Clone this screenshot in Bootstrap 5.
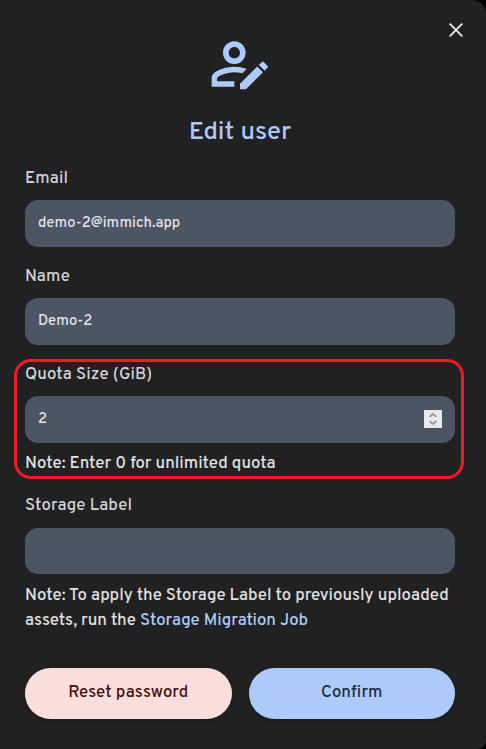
<!DOCTYPE html>
<html lang="en">
<head>
<meta charset="utf-8">
<meta name="viewport" content="width=device-width, initial-scale=1">
<title>Edit user</title>
<link href="https://cdn.jsdelivr.net/npm/bootstrap@5.3.0/dist/css/bootstrap.min.css" rel="stylesheet">
<style>
body{background:#000;font-family:Overpass,Roboto,sans-serif;font-size:16.8px;font-weight:500;line-height:25px;overflow:hidden}
.user-dialog{height:749px;background:#212121;color:#e2e2e5;border-radius:0 14px 9px 0;padding:0 31px 0 25px}
.dialog-close{top:21px;right:21px;width:18px;height:18px;color:#e6e7ea}
.dialog-head{padding-top:30px;color:#adcbfa;height:165px}
.dialog-title{font-size:25.5px;line-height:32px;font-weight:500;margin-top:19px}
.form-label{display:block;line-height:24px;height:24px;margin-bottom:9px;padding-top:2px;box-sizing:content-box;font-weight:500;letter-spacing:.12px;color:#d2d4da}
.form-control,.form-control:focus{height:47px;border:0;border-radius:13px;background:#4c5564;color:#e2e4e9;font-size:14.75px;font-weight:500;padding:0 13px 1px;line-height:22px}
.field-group{height:98px}
.quota-group{height:131px}
.storage-group .form-label{margin-bottom:10px}
.storage-group .form-control{height:46px}
.field-note{margin:8px 0 0}
.storage-group .field-note{margin-top:9px}
.spinner-box{right:13px;top:49px;width:18px;height:18px;background:#e9e9ed}
.quota-mark{left:-11px;right:-9px;top:-2px;height:120px;border:3px solid #ed1c24;border-radius:17px;pointer-events:none}
.job-link{color:#adcbfa}
.dialog-actions{gap:17px;margin-top:35px}
.dialog-actions .btn{height:51px;border:0;padding:0 0 1px;font-size:16.8px;font-weight:500;letter-spacing:.1px;box-shadow:0 2px 3px #0002}
.btn-reset{background:#fadedb;color:#450e0c}
.btn-confirm{background:#adcbfa;color:#1f2937}
</style>
<script src="https://cdn.jsdelivr.net/npm/bootstrap@5.3.0/dist/js/bootstrap.bundle.min.js"></script>
</head>
<body>
<main class="user-dialog position-relative">
  <button class="dialog-close position-absolute btn p-0 border-0 d-flex" aria-label="Close"><svg width="18" height="18" viewBox="0 0 18 18" fill="none" stroke="currentColor" stroke-width="1.9"><path d="M2.7 2.7 15.3 15.3M15.3 2.7 2.7 15.3"/></svg></button>
  <header class="dialog-head d-flex flex-column align-items-center">
    <svg class="flex-shrink-0" width="68" height="68" viewBox="0 0 24 24" fill="currentColor"><path d="M2 17V20H10V18.11H3.9V17C3.9 16.36 7.03 14.9 10 14.9C10.96 14.91 11.91 15.04 12.83 15.28L14.35 13.76C12.95 13.29 11.5 13.03 10 13C7.33 13 2 14.33 2 17M10 4C7.79 4 6 5.79 6 8S7.79 12 10 12 14 10.21 14 8 12.21 4 10 4M10 10C8.9 10 8 9.11 8 8S8.9 6 10 6 12 6.9 12 8 11.11 10 10 10M21.7 13.35L20.7 14.35L18.65 12.35L19.65 11.35C19.86 11.14 20.21 11.14 20.42 11.35L21.7 12.63C21.91 12.84 21.91 13.14 21.7 13.35M12 18.94L18.06 12.88L20.11 14.88L14.11 20.95H12V18.94"/></svg>
    <h1 class="dialog-title mb-0">Edit user</h1>
  </header>
  <form>
    <div class="field-group"><label class="form-label" for="email">Email</label><input class="form-control" id="email" value="demo-2@immich.app"></div>
    <div class="field-group"><label class="form-label" for="name">Name</label><input class="form-control" id="name" value="Demo-2"></div>
    <div class="quota-group position-relative">
      <label class="form-label" for="quota">Quota Size (GiB)</label><input class="form-control" id="quota" value="2">
      <div class="spinner-box position-absolute"><svg class="d-block" width="18" height="18" viewBox="0 0 18 18" fill="none" stroke="#8f8f9d" stroke-width="1.7"><path d="M5.7 6.8 9 3.8l3.3 3M5.7 11.2l3.3 3 3.3-3"/></svg></div>
      <p class="field-note">Note: Enter 0 for unlimited quota</p>
      <div class="quota-mark position-absolute"></div>
    </div>
    <div class="storage-group"><label class="form-label" for="storage">Storage Label</label><input class="form-control" id="storage">
      <p class="field-note text-nowrap">Note: To apply the Storage Label to previously uploaded<br>assets, run the <a class="job-link text-decoration-none" href="#">Storage Migration Job</a></p>
    </div>
    <div class="dialog-actions d-flex"><button type="button" class="btn btn-reset rounded-pill flex-fill w-50">Reset password</button><button type="button" class="btn btn-confirm rounded-pill flex-fill w-50">Confirm</button></div>
  </form>
</main>
</body>
</html>
